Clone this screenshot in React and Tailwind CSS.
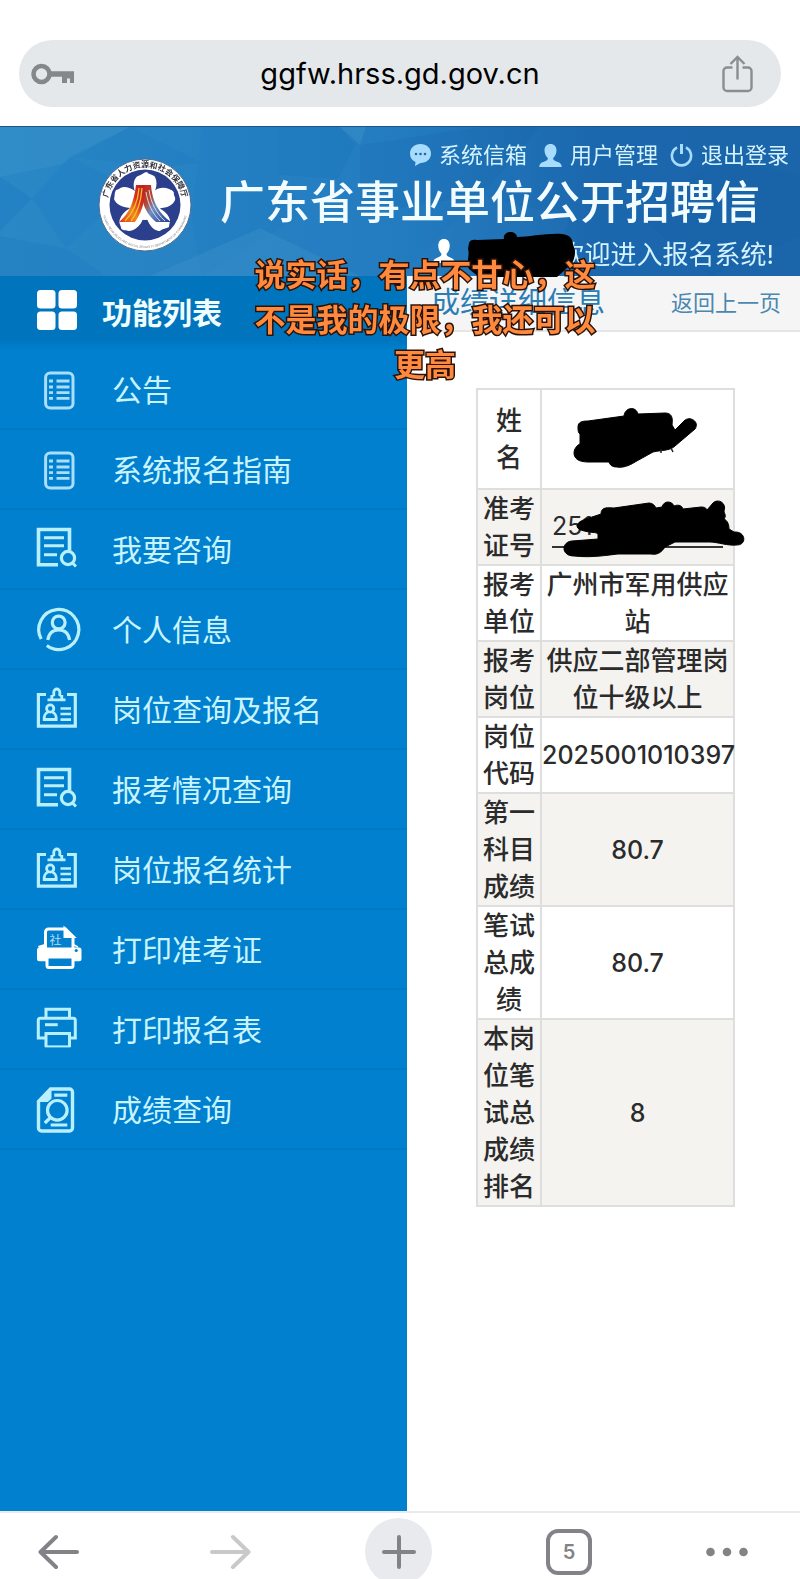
import React from "react";

const menuItems = [
  { id: 1, label: "公告", icon: "list" },
  { id: 2, label: "系统报名指南", icon: "list" },
  { id: 3, label: "我要咨询", icon: "docSearch" },
  { id: 4, label: "个人信息", icon: "person" },
  { id: 5, label: "岗位查询及报名", icon: "badge" },
  { id: 6, label: "报考情况查询", icon: "docSearch" },
  { id: 7, label: "岗位报名统计", icon: "badge" },
  { id: 8, label: "打印准考证", icon: "printerFull" },
  { id: 9, label: "打印报名表", icon: "printer" },
  { id: 10, label: "成绩查询", icon: "score" },
];

const results = [
  { label: "报考单位", value: "广州市军用供应站" },
  { label: "报考岗位", value: "供应二部管理岗位十级以上" },
  { label: "岗位代码", value: "2025001010397" },
  { label: "第一科目成绩", value: "80.7" },
  { label: "笔试总成绩", value: "80.7" },
  { label: "本岗位笔试总成绩排名", value: "8" },
];

const iconShapes = {
  list: (
    <>
      <rect x="9.6" y="6" width="27.4" height="35" rx="4.5" strokeWidth="3" />
      <path d="M13 14h4M13 20h4M13 25.7h4M13 31.3h4M20.5 14h13M20.5 20h13M20.5 25.7h13M20.5 31.3h13" strokeWidth="2.8" />
    </>
  ),
  docSearch: (
    <>
      <path d="M33.5 23V2.5h-31v35.3H22" strokeWidth="3.6" />
      <path d="M8 10.7h20M8 18.7h20M8 27.7h13" strokeWidth="3" />
      <circle cx="32" cy="31" r="6.6" strokeWidth="3.2" />
      <path d="M36.5 36l3.5 3.5" />
    </>
  ),
  person: (
    <>
      <path d="M10.8 38.5a20 20 0 1 0-5.6-6.5" strokeWidth="3.2" />
      <circle cx="22.7" cy="15.5" r="6.4" strokeWidth="3.2" />
      <path d="M11.8 33c1-7 5-10 10.9-10s9.9 3 10.9 10" strokeWidth="3.2" />
    </>
  ),
  badge: (
    <>
      <path d="M10 7.5H2.4v31.6h36.9V7.5H31" strokeWidth="3.2" />
      <path d="M11.5 12.8h18M15.8 12V9l2-1V5a3 3 0 0 1 6 0v3l2 1v3" strokeWidth="2.8" />
      <circle cx="14.2" cy="21.5" r="3.6" strokeWidth="2.8" />
      <path d="M12 25c-3 1.5-4 3-3.8 7.5h12c.2-4.5-.8-6-3.8-7.5" strokeWidth="2.8" />
      <path d="M24.5 21.5h10.5M24.5 27h10.5M24.5 32.6h10.5" strokeWidth="2.6" />
    </>
  ),
  printerFull: (
    <>
      <path d="M9.5 24V5a3 3 0 0 1 3-3h17l7.5 7.5V24" />
      <path d="M29 2v7.5h8z" fill="currentColor" />
      <path d="M4 21.5h5.5v-4L3 19.5zM37 17.5l5 2.5" strokeWidth="1.5" fill="currentColor" />
      <rect x="1" y="20.5" width="44.5" height="13.8" rx="2.5" fill="currentColor" stroke="none" />
      <circle cx="40.2" cy="23.5" r="1.6" fill="#0080cf" stroke="none" />
      <rect x="11" y="30" width="26" height="10.5" rx="2" fill="#0080cf" />
      <text x="13.5" y="18" fontSize="12" fill="currentColor" stroke="none" className="opacity-70">社</text>
    </>
  ),
  printer: (
    <>
      <path d="M10 10.5V2.2h23.5v8.3" strokeWidth="3" />
      <path d="M9 31H2.3V13.2a2 2 0 0 1 2-2h33a2 2 0 0 1 2 2V31H34" strokeWidth="3" />
      <path d="M10 40V26.5h23.5V40" strokeWidth="3" />
      <path d="M9 39.4h25.5" strokeWidth="2" />
      <path d="M9 17.7h12.7" strokeWidth="3" />
    </>
  ),
  score: (
    <>
      <path d="M2.5 14.5V41a3 3 0 0 0 3 3h28a3 3 0 0 0 3-3V5a3 3 0 0 0-3-3H14.5z" strokeWidth="3.4" />
      <path d="M2.5 14.5h9.5l3-3V2z" fill="currentColor" strokeWidth="1" />
      <circle cx="21.3" cy="23.3" r="9.8" strokeWidth="3.2" />
      <path d="M14.5 30.5L8.8 36M18.3 8.2h13M14.7 38h16.6" strokeWidth="3.2" />
    </>
  ),
};

const MenuIcon = ({ name }) => (
  <svg
    viewBox="0 0 46 46"
    className={`size-[46px] shrink-0 overflow-visible ${name === "list" ? "text-[#a9deff]" : name === "printerFull" ? "text-white" : "text-[#b9f0ff]"}`}
    fill="none"
    stroke="currentColor"
    strokeWidth="3"
  >
    {iconShapes[name]}
  </svg>
);

const UserIcon = ({ className }) => (
  <svg viewBox="0 0 23 23" preserveAspectRatio="none" className={className} fill="currentColor">
    <path d="M11.5 0c3.7 0 6 2.6 6 6.3 0 3.2-1.4 6.3-3.3 7.7-.2 1.8.7 2.5 3.3 3.5 3.3 1.2 5 2 5.2 5.5H.3c.2-3.5 1.9-4.3 5.2-5.5 2.6-1 3.5-1.7 3.3-3.5-1.9-1.4-3.3-4.5-3.3-7.7C5.5 2.6 7.8 0 11.5 0z" />
  </svg>
);

const Emblem = () => (
  <svg viewBox="0 0 94 94" className="size-[94px] shrink-0">
    <defs>
      <path id="ringTop" d="M9.5 51A37.7 37.7 0 1 1 84.5 51" />
      <path id="ringBottom" d="M4 47A43 43 0 0 0 90 47" />
      <linearGradient id="warm" x1="0" y1="1" x2="1" y2="0">
        <stop offset="0" stopColor="#e0341c" />
        <stop offset="0.4" stopColor="#f08a1d" />
        <stop offset="0.65" stopColor="#d5311f" />
        <stop offset="1" stopColor="#b81f22" />
      </linearGradient>
      <linearGradient id="cool" x1="0" y1="0" x2="1" y2="1">
        <stop offset="0" stopColor="#c22522" />
        <stop offset="0.3" stopColor="#b5452f" />
        <stop offset="0.5" stopColor="#6f8fc4" />
        <stop offset="1" stopColor="#23398b" />
      </linearGradient>
    </defs>
    <circle cx="47" cy="47" r="46" fill="#fff" stroke="#4d6a91" strokeWidth="1" />
    <circle cx="47" cy="47" r="35.5" fill="#2c3f8c" />
    <g fill="#fff">
      <path d="M47 47C34 36 33 22 40 18c4-1 6-4 9-4 2 3 6 2 8 5 4 8 0 18-10 28z" />
      <path d="M47 47C33 53 19 49 16 41c1-3 0-6 2-9 3 0 4-3 8-3 8 0 16 6 21 18z" />
      <path d="M47 47c4-14 15-20 24-16 2 1 4 1 5 4-1 2 2 4 1 7-3 8-16 11-30 5z" />
      <path d="M47 47c1 14-6 25-16 26-3-1-7 0-8-3 0-3-3-5-1-9 3-8 12-14 25-14z" />
      <path d="M47 47c13 0 23 7 25 15 0 3-1 4-1 7-3 2-6 1-9 4-8 0-15-10-15-26z" />
      <circle cx="47" cy="46" r="16" />
    </g>
    <path d="M45 27h8c1 16 8 29 20 37H58c-6-5-12-13-13-21z" fill="url(#cool)" />
    <path d="M38 27h8c1 6 1 11 0 16-2 9-5 15-9 21H21c10-8 15-20 17-37z" fill="url(#warm)" />
    <path d="M41 30c-1 13-5 24-14 33M44 30c-1 14-4 24-11 33" stroke="#f9bd2f" strokeWidth="1.3" fill="none" />
    <path d="M48 34c2 12 6 21 14 29M51 32c2 13 7 23 16 31" stroke="#dfe6f5" strokeWidth="0.9" fill="none" />
    <text fontSize="8" fontWeight="bold" fill="#33333d" textAnchor="middle">
      <textPath href="#ringTop" startOffset="50%">广东省人力资源和社会保障厅</textPath>
    </text>
    <text fontSize="3" fill="#777" textAnchor="middle" className="font-['Liberation_Sans',sans-serif]">
      <textPath href="#ringBottom" startOffset="50%">HUMAN RESOURCES AND SOCIAL SECURITY DEPARTMENT OF GUANGDONG</textPath>
    </text>
  </svg>
);

const Facets = () => (
  <svg viewBox="0 0 800 150" preserveAspectRatio="none" className="absolute inset-0 size-full">
    <defs>
      <linearGradient id="sky" x1="0" y1="0" x2="1" y2="0">
        <stop offset="0" stopColor="#2a88c6" />
        <stop offset="0.5" stopColor="#237cc0" />
        <stop offset="0.75" stopColor="#1b67ad" />
        <stop offset="1" stopColor="#1b65aa" />
      </linearGradient>
    </defs>
    <rect width="800" height="150" fill="url(#sky)" />
    <g opacity="0.5">
      <path d="M0 0h130L60 38 0 50z" fill="#55a5cf" opacity="0.35" />
      <path d="M0 50l32 22L0 105z" fill="#0c72bb" opacity="0.45" />
      <path d="M70 30l60-30 72 36-48 4z" fill="#1471b8" opacity="0.3" />
      <path d="M32 72l38-42 62 32-66 60z" fill="#1a7dc3" opacity="0.6" />
      <path d="M0 110l66 12 40 28H0z" fill="#1170b6" opacity="0.35" />
      <path d="M202 0h76v48l28 38-104 64-10-60z" fill="#1c7bc1" opacity="0.45" />
      <path d="M278 0h62l15 18-17 34-60-4z" fill="#0d66ac" opacity="0.3" />
      <path d="M340 0h26l-6 18z" fill="#4fa3cd" opacity="0.5" />
      <path d="M150 150l110-48 100 48z" fill="#64acd5" opacity="0.3" />
      <path d="M360 18l120-18 60 0-58 68-122 20z" fill="#10589f" opacity="0.22" />
      <path d="M480 70l90 20-20 60H400z" fill="#3b8cca" opacity="0.25" />
      <path d="M640 90l80-60 80 20v60l-90 40z" fill="#0f5398" opacity="0.2" />
    </g>
  </svg>
);

const App = () => {
  return (
    <div className="relative flex min-h-screen flex-col overflow-hidden bg-white font-['Inter','Noto_Sans_CJK_SC',sans-serif]">
      {/* Address bar */}
      <div className="px-[19px] pt-10 pb-[19px]">
        <div className="flex h-[67px] items-center justify-between rounded-full bg-[#e5e8eb] pr-7 pl-3">
          <svg viewBox="0 0 43 22" className="w-[47px] pr-1 text-[#85888b]" aria-label="密码">
            <circle cx="10.5" cy="11" r="8" fill="none" stroke="currentColor" strokeWidth="4.6" />
            <path d="M19 8.2h24V20h-4v-4.5h-3V20h-5v-6.3H19z" fill="currentColor" />
          </svg>
          <span className="text-[29px] text-black">ggfw.hrss.gd.gov.cn</span>
          <button aria-label="分享">
            <svg viewBox="0 0 31 38" className="w-[31px] text-[#8b8e91]" fill="none" stroke="currentColor" strokeWidth="2.4">
              <path d="M10.5 12.5H5a3.5 3.5 0 0 0-3.5 3.5v16.5A3.5 3.5 0 0 0 5 36h21a3.5 3.5 0 0 0 3.5-3.5V16a3.5 3.5 0 0 0-3.5-3.5h-5.5" />
              <path d="M15.5 24.5V2.5M8.5 9l7-7 7 7" />
            </svg>
          </button>
        </div>
      </div>

      {/* Site header */}
      <header className="relative flex h-[150px] border-t border-[#1d5687] pl-[98px] text-[#d5f3ff]">
        <Facets />
        <div className="relative pt-[31px]">
          <Emblem />
        </div>
        <div className="relative flex min-w-0 flex-1 flex-col pl-7">
          <nav className="flex items-center justify-end gap-3 pt-3 pr-[11px] text-[22px] leading-8 whitespace-nowrap">
            <a href="#mail" className="flex items-center gap-[8px]">
              <svg viewBox="0 0 21 22" className="w-[21px] text-[#a8dcff]">
                <path d="M10.5 0C16.5 0 21 4 21 9.5S16.5 19 10.5 19L5 22l.5-4C2 16.5 0 13.5 0 9.5 0 4 4.5 0 10.5 0z" fill="currentColor" />
                <g fill="#2268a6">
                  <circle cx="6" cy="10" r="1.3" />
                  <circle cx="10.5" cy="10" r="1.3" />
                  <circle cx="15" cy="10" r="1.3" />
                </g>
              </svg>
              系统信箱
            </a>
            <a href="#user" className="flex items-center gap-[8px]">
              <UserIcon className="size-[23px] text-[#a8dcff]" />
              用户管理
            </a>
            <a href="#logout" className="flex items-center gap-[8px]">
              <svg viewBox="0 0 23 23" className="w-[23px] text-[#a8dcff]" fill="none" stroke="currentColor" strokeWidth="2.6">
                <path d="M7 3.3a9.6 9.6 0 1 0 9 0" />
                <path d="M11.5 0v10" strokeWidth="3" />
              </svg>
              退出登录
            </a>
          </nav>
          <h1 className="text-[45px] leading-[64px] font-medium whitespace-nowrap text-[#f2fcff]">广东省事业单位公开招聘信</h1>
          <div className="flex items-center justify-end pr-[26px] text-[26px] leading-[40px] whitespace-nowrap">
            <UserIcon className="mb-2 h-6 w-[22px] text-white" />
            <span className="relative h-8 w-[104px]">
              <svg viewBox="0 0 110 50" className="absolute -top-[8px] left-[12px] z-10 h-[50px] w-[110px]">
                <path d="M2 12c1-3 4-4 8-3l27-1c-2-8 12-10 13-2 12 0 30-4 45-3 8 1 10 4 11 10l2 7c0 6-2 14-8 17l-10 9H12L2 38C-1 30 3 24 1 18z" />
              </svg>
            </span>
            <span>欢迎进入报名系统!</span>
          </div>
        </div>
      </header>

      <div className="flex flex-1">
        {/* Sidebar */}
        <aside className="w-[407px] shrink-0 bg-[#0080cf]">
          <h2 className="flex h-[74px] items-center bg-linear-to-b from-[#0074bd] from-85% to-[#0080cf] pl-[37px] text-[30px] font-bold text-[#f0fdff]">
            <svg viewBox="0 0 40 40" className="mr-[25px] mb-[6px] w-10" fill="#fff">
              <rect width="18.5" height="18.5" rx="3.5" />
              <rect x="21.5" width="18.5" height="18.5" rx="3.5" />
              <rect y="21.5" width="18.5" height="18.5" rx="3.5" />
              <rect x="21.5" y="21.5" width="18.5" height="18.5" rx="3.5" />
            </svg>
            功能列表
          </h2>
          <ul>
            {menuItems.map((item) => (
              <li key={item.id} className="border-b-2 border-[#0078c3]">
                <a href={`#menu-${item.id}`} className="flex h-[78px] items-center gap-[30px] pt-0.5 pl-9 text-[30px] text-[#c9f4ff]">
                  <MenuIcon name={item.icon} />
                  {item.label}
                </a>
              </li>
            ))}
          </ul>
        </aside>

        {/* Content */}
        <main className="min-w-0 flex-1">
          <div className="flex h-14 items-center justify-between border-b-2 border-[#e6e6e8] bg-[#f5f5f6] pr-[19px] pl-6 whitespace-nowrap text-[#4a88b0]">
            <h3 className="text-[29px] text-[#2a7db5]">成绩详细信息</h3>
            <a href="#back" className="text-[22px]">返回上一页</a>
          </div>
          <div className="pt-14 pl-[69px]">
            <table className="w-[259px] table-fixed border-collapse text-center text-[26px] leading-[37px] font-medium text-[#2b2b2b]">
              <colgroup>
                <col className="w-[64px]" />
                <col />
              </colgroup>
              <tbody>
                <tr>
                  <th scope="row" className="border-2 border-[#dedede] px-4 py-3 font-medium">姓名</th>
                  <td className="border-2 border-[#dedede]">
                    <svg viewBox="0 0 124 60" className="ml-8 w-[124px] overflow-visible">
                      <path
                        d="M4 18c0-5 4-6 10-6l36-5c1-9 12-10 14-2l27-1c7 0 8 5 7 12l3 5 9-9c6-6 16 1 11 8L101 37c-5 5-14 4-22 6L61 53c-6 4-13 6-18 5-5 0-7-2-8-5H14C4 53 0 49 0 44c0-4 3-8 6-9V25c-2-1-2-4-2-7z"
                        stroke="#000"
                        strokeLinejoin="round"
                      />
                      <path d="M87 40v4M97 39l2 4" stroke="#222" strokeWidth="1.5" />
                    </svg>
                  </td>
                </tr>
                <tr className="bg-[#f4f3f0]">
                  <th scope="row" className="border-2 border-[#dedede] font-medium">准考证号</th>
                  <td className="border-2 border-[#dedede] px-[10px]">
                    <div className="relative border-b-2 border-[#333] text-left text-[25px] leading-[39px] font-normal">
                      2510
                      <svg viewBox="0 0 178 54" className="absolute -top-[7px] left-[12px] h-[54px] w-[178px] overflow-visible">
                        <path
                          d="M13 26c1-6 10-7 24-12 0-8 8-6 13-6l35-5c4 0 6 3 7 5l6-1c2-7 10-6 12-1 5-2 8 0 9 3l18-2c4 0 5 1 6 3l6-7c5-5 14 0 11 8 0 3 3 4 0 8 4 2 5 6 5 10l5 3c12-1 13 13 3 13-9 1-20-3-27-3h-35l-10 5c-4 6-8 8-14 7H54c-10 1-26 4-44 2-13 0-13-14-2-15l26-2v-6c-9-1-21-2-21-7z"
                          stroke="#000"
                          strokeLinejoin="round"
                        />
                      </svg>
                    </div>
                  </td>
                </tr>
                {results.map((row, i) => (
                  <tr key={row.label} className={i % 2 ? "bg-[#f4f3f0]" : "bg-white"}>
                    <th scope="row" className="border-2 border-[#dedede] px-1 font-medium">{row.label}</th>
                    <td className="border-2 border-[#dedede]">
                      {/^[\d.]+$/.test(row.value) ? (
                        <span className="text-[25px]">{row.value}</span>
                      ) : (
                        row.value
                      )}
                    </td>
                  </tr>
                ))}
              </tbody>
            </table>
          </div>
        </main>
      </div>

      {/* Caption laid over the page */}
      <p className="absolute top-[252px] left-[254px] z-20 w-[342px] text-center text-[31px] leading-[45px] font-bold text-[#ff8a3d] [-webkit-text-stroke:3px_#2b1208] [paint-order:stroke_fill]">
        说实话，有点不甘心，这
        <br />
        不是我的极限，我还可以
        <br />
        更高
      </p>

      {/* Browser toolbar */}
      <nav className="h-[68px] overflow-hidden border-t-2 border-[#e9eaeb] bg-white pt-[5px]">
        <div className="flex h-[67px] items-center justify-between pr-[52px] pl-[38px] text-[#828386]">
          <button aria-label="后退" className="w-[58px]">
            <svg viewBox="0 0 41 36" className="w-[41px]" fill="none" stroke="currentColor" strokeWidth="4" strokeLinecap="round" strokeLinejoin="round">
              <path d="M39 18H3M18 3L2.5 18 18 33" />
            </svg>
          </button>
          <button aria-label="前进" className="text-[#c9c9cb]">
            <svg viewBox="0 0 41 36" className="w-[41px]" fill="none" stroke="currentColor" strokeWidth="4" strokeLinecap="round" strokeLinejoin="round">
              <path d="M2 18h36M23 3l15.5 15L23 33" />
            </svg>
          </button>
          <button aria-label="新建标签页" className="flex size-[67px] items-center justify-center rounded-full bg-[#e8eaee]">
            <svg viewBox="0 0 34 34" className="w-[34px]" fill="none" stroke="currentColor" strokeWidth="4" strokeLinecap="round">
              <path d="M2 17h30M17 2v30" />
            </svg>
          </button>
          <button aria-label="标签页" className="flex size-[46px] items-center justify-center rounded-xl border-4 border-current text-[20px] font-semibold">
            5
          </button>
          <button aria-label="更多">
            <svg viewBox="0 0 42 10" className="w-[42px]" fill="currentColor">
              <circle cx="4.5" cy="5" r="4.3" />
              <circle cx="21" cy="5" r="4.3" />
              <circle cx="37.5" cy="5" r="4.3" />
            </svg>
          </button>
        </div>
      </nav>
    </div>
  );
};

export default App;
